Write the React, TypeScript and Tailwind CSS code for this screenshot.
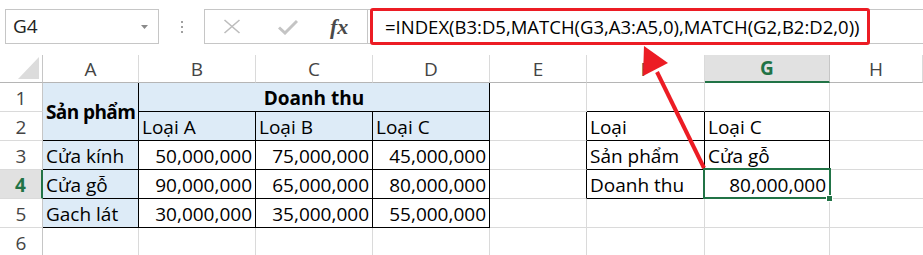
import React from "react";

type Cell = {
  t?: string;
  r?: "g" | "k" | "h" | "n";
  b?: "g" | "k" | "h";
  cls?: string;
  align?: "l" | "r" | "c";
  bold?: boolean;
  blue?: boolean;
  sel?: boolean;
};

const R: Record<string, string> = {
  g: "border-r border-r-[#dadada]",
  k: "border-r border-r-black",
  h: "border-r border-r-[#c6c6c6]",
  n: "",
};
const B: Record<string, string> = {
  g: "border-b border-b-[#dadada]",
  k: "border-b border-b-black",
  h: "border-b border-b-[#b5b5b5]",
};
const AL: Record<string, string> = {
  l: "justify-start pl-[3px]",
  r: "justify-end pr-[3px]",
  c: "justify-center",
};

function GridCell({ c }: { c: Cell }) {
  const cls = [
    "relative flex items-center leading-[28px] whitespace-nowrap text-[19px] text-black",
    R[c.r ?? "g"],
    B[c.b ?? "g"],
    AL[c.align ?? "l"],
    c.bold ? "font-bold" : "",
    c.blue ? "bg-[#ddebf7]" : "bg-white",
    c.sel ? "z-10" : "",
    c.cls ?? "",
  ].join(" ");
  return (
    <div className={cls}>
      <span className="pt-[1px]">{c.t}</span>
      {c.sel && (
        <>
          <div className="absolute -left-[2px] -top-[2px] -right-[2px] -bottom-[1px] border-2 border-[#217346]" />
          <div className="absolute w-[7px] h-[7px] -right-[4px] -bottom-[4px] bg-[#217346] border border-white" />
        </>
      )}
    </div>
  );
}

function RowHead({ n, sel }: { n: string; sel?: boolean }) {
  return (
    <div
      className={
        sel
          ? "flex items-center justify-center bg-[#e1e1e1] border-r-2 border-r-[#217346] border-b border-b-[#dadada] text-[19px] font-bold text-[#217346] leading-[28px]"
          : "flex items-center justify-center bg-white border-r border-r-[#c6c6c6] border-b border-b-[#dadada] text-[19px] text-[#444] leading-[28px]"
      }
    >
      <span className="pt-[1px]">{n}</span>
    </div>
  );
}

function ColHead({ l, sel }: { l: string; sel?: boolean }) {
  return (
    <div
      className={
        sel
          ? "flex items-center justify-center bg-[#e1e1e1] border-r border-r-[#c6c6c6] border-b-2 border-b-[#217346] text-[19px] font-bold text-[#217346]"
          : "flex items-center justify-center bg-white border-r border-r-[#dadada] border-b border-b-[#b5b5b5] text-[19px] text-[#444]"
      }
    >
      <span className="pt-[1px]">{l}</span>
    </div>
  );
}

export default function App() {
  const n = (t: string): Cell => ({ t, r: "k", b: "k", align: "r" });
  const rows: { h: string; sel?: boolean; cells: Cell[] }[] = [
    {
      h: "1",
      cells: [
        { t: "Sản phẩm", r: "k", b: "k", bold: true, blue: true, cls: "row-span-2 tracking-[-0.6px]" },
        { t: "Doanh thu", r: "k", b: "k", bold: true, blue: true, align: "c", cls: "col-span-3" },
        {},
        { b: "k" },
        { b: "k" },
        { r: "n" },
      ],
    },
    {
      h: "2",
      cells: [
        { t: "Loại A", r: "k", b: "k", blue: true },
        { t: "Loại B", r: "k", b: "k", blue: true },
        { t: "Loại C", r: "k", b: "k", blue: true },
        { r: "k" },
        { t: "Loại", r: "k", b: "k" },
        { t: "Loại C", r: "k", b: "k" },
        { r: "n" },
      ],
    },
    {
      h: "3",
      cells: [
        { t: "Cửa kính", r: "k", b: "k", blue: true },
        n("50,000,000"),
        n("75,000,000"),
        n("45,000,000"),
        { r: "k" },
        { t: "Sản phẩm", r: "k", b: "k" },
        { t: "Cửa gỗ", r: "k", b: "k" },
        { r: "n" },
      ],
    },
    {
      h: "4",
      sel: true,
      cells: [
        { t: "Cửa gỗ", r: "k", b: "k", blue: true },
        n("90,000,000"),
        n("65,000,000"),
        n("80,000,000"),
        { r: "k" },
        { t: "Doanh thu", r: "k", b: "k" },
        { t: "80,000,000", r: "k", b: "k", align: "r", sel: true },
        { r: "n" },
      ],
    },
    {
      h: "5",
      cells: [
        { t: "Gach lát", r: "k", b: "k", blue: true },
        n("30,000,000"),
        n("35,000,000"),
        n("55,000,000"),
        {},
        {},
        {},
        { r: "n" },
      ],
    },
    {
      h: "6",
      cells: [{}, {}, {}, {}, {}, {}, {}, { r: "n" }],
    },
  ];

  return (
    <div className="relative w-[923px] h-[255px] overflow-hidden bg-white font-['Open_Sans','Noto_Sans',sans-serif]">
      {/* Formula bar */}
      <div className="h-[55px] flex items-start pt-[9px]">
        <div className="ml-[5px] w-[154px] h-[35px] border border-[#c6c6c6] flex items-center justify-between pl-[7px] pr-[10px]">
          <span className="text-[19px] text-[#222] leading-none">G4</span>
          <svg width="7" height="4" viewBox="0 0 7 4">
            <polygon points="0,0 7,0 3.5,4" fill="#8a8a8a" />
          </svg>
        </div>
        <div className="w-[45px] h-[35px] flex flex-col items-center justify-center gap-[3px]">
          <div className="w-[2px] h-[2px] bg-[#a0a0a0]" />
          <div className="w-[2px] h-[2px] bg-[#a0a0a0]" />
          <div className="w-[2px] h-[2px] bg-[#a0a0a0]" />
        </div>
        <div className="flex-1 h-[35px] border border-r-0 border-[#c6c6c6] flex items-stretch">
          <div className="w-[163px] flex items-center border-r border-[#c6c6c6]">
            <svg className="ml-[18px]" width="18" height="15" viewBox="0 0 18 15">
              <path d="M1.5 1 L16.5 14 M16.5 1 L1.5 14" stroke="#bdbdbd" strokeWidth="1.6" fill="none" />
            </svg>
            <svg className="ml-[37px]" width="20" height="16" viewBox="0 0 20 16">
              <path d="M1 8.5 L7 14 L19 2" stroke="#c4c4c4" strokeWidth="3" fill="none" />
            </svg>
            <span className="ml-[32px] text-[22px] italic font-bold text-[#4a4a4a] font-['Liberation_Serif',serif] leading-none">
              fx
            </span>
          </div>
          <div className="flex items-center pl-[17px] text-[18.5px] text-black whitespace-nowrap">
            =INDEX(B3:D5,MATCH(G3,A3:A5,0),MATCH(G2,B2:D2,0))
          </div>
        </div>
      </div>

      {/* Grid */}
      <div className="grid grid-cols-[43px_96px_117px_117px_117px_97px_118px_125px_1fr] grid-rows-[28px_29px_29px_29px_29px_29px_29px]">
        <div className="relative bg-white border-r border-r-[#c6c6c6] border-b border-b-[#b5b5b5]">
          <svg className="absolute left-0 top-0" width="42" height="27" viewBox="0 0 42 27">
            <polygon points="39,2 39,24 18,24" fill="#dcdcdc" />
          </svg>
        </div>
        <ColHead l="A" />
        <ColHead l="B" />
        <ColHead l="C" />
        <ColHead l="D" />
        <ColHead l="E" />
        <ColHead l="F" />
        <ColHead l="G" sel />
        <ColHead l="H" />
        {rows.map((row) => (
          <React.Fragment key={row.h}>
            <RowHead n={row.h} sel={row.sel} />
            {row.cells.map((c, i) => (
              <GridCell key={i} c={c} />
            ))}
          </React.Fragment>
        ))}
      </div>

      {/* Annotation overlay */}
      <div className="absolute left-[370px] top-[8px] w-[500px] h-[37px] border-[3px] border-[#ec1c24] rounded-[3px]" />
      <svg className="absolute left-0 top-0 pointer-events-none z-20" width="923" height="255" viewBox="0 0 923 255">
        <line x1="704" y1="168" x2="657" y2="72" stroke="#ec1c24" strokeWidth="4" />
        <polygon points="644,46 668,63 643,76" fill="#ec1c24" />
      </svg>
    </div>
  );
}
